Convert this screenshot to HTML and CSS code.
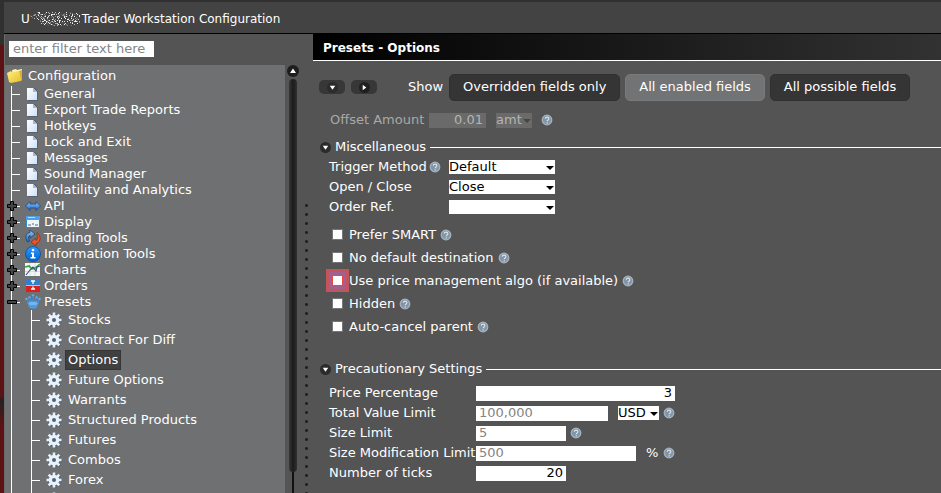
FILE: index.html
```html
<!DOCTYPE html>
<html lang="en">
<head>
<meta charset="utf-8">
<title>Trader Workstation Configuration</title>
<link rel="stylesheet" href="styles.css">
</head>
<body>
<svg class="defs" aria-hidden="true">
  <defs>
    <linearGradient id="gFolder" x1="0" y1="0" x2="1" y2="1"><stop offset="0" stop-color="#fff08a"/><stop offset="1" stop-color="#e6bd1c"/></linearGradient>
    <linearGradient id="gBlue" x1="0" y1="0" x2="0" y2="1"><stop offset="0" stop-color="#8fc8ff"/><stop offset="1" stop-color="#2466b8"/></linearGradient>
    <linearGradient id="gInfo" x1="0" y1="0" x2="0" y2="1"><stop offset="0" stop-color="#2d9bff"/><stop offset="1" stop-color="#0560cf"/></linearGradient>
    <linearGradient id="gPage" x1="0" y1="0" x2="1" y2="1"><stop offset="0" stop-color="#ffffff"/><stop offset="1" stop-color="#cfe2f8"/></linearGradient>
    <radialGradient id="gHelp" cx=".4" cy=".35" r=".7"><stop offset="0" stop-color="#7d93a8"/><stop offset="1" stop-color="#8799aa"/></radialGradient>
    <filter id="speckle" x="0" y="0" width="1" height="1">
      <feTurbulence type="fractalNoise" baseFrequency=".85" numOctaves="2" seed="7"/>
      <feColorMatrix values="0 0 0 0 .85  0 0 0 0 .85  0 0 0 0 .85  9 0 0 0 -4.9"/>
      <feComposite in2="SourceGraphic" operator="in"/>
    </filter>
  </defs>
  <symbol id="branch" viewBox="0 0 16 20"><path d="M4.500 0V20M4.500 10.500H13" fill="none" stroke="#fff"/></symbol>
  <symbol id="plus" viewBox="0 0 10 10"><path d="M3.500 .5h3v3h3v3h-3v3h-3v-3h-3v-3h3z" fill="#454545" stroke="#000"/></symbol>
  <symbol id="minus" viewBox="0 0 10 10"><path d="M.5 3.500h9v3h-9z" fill="#454545" stroke="#000"/></symbol>
  <symbol id="folder" viewBox="0 0 16 16"><path d="M5 2l4-1 1 1 5-1v11l-8 2z" fill="#fff5b5"/><path d="M0 5l4-2 1 1 7-1 2 10-10 2-2-1z" fill="url(#gFolder)"/><path d="M12 3l2 10 1-1V2z" fill="#d8b12c"/></symbol>
  <symbol id="page" viewBox="0 0 16 16"><path d="M3 2h7l3 4v9H3z" fill="#41566c" opacity=".6"/><path d="M2 2h6l4 4v8H2z" fill="url(#gPage)"/><path d="M8 2v4h4z" fill="#9fb8d4"/></symbol>
  <symbol id="api" viewBox="0 0 16 16"><path d="M.5 8L5 3.500V6h6V3.500L15.500 8 11 12.500V10H5v2.500z" fill="url(#gBlue)" stroke="#174a8c" stroke-width=".8"/></symbol>
  <symbol id="display" viewBox="0 0 16 16"><path d="M1.500 2.500h13v11h-13z" fill="#edf4fa" stroke="#3585c9"/><path d="M1 2h14v4H1z" fill="#4f9fe2"/><path d="M3 11h3m1-1h2m1 1h3" stroke="#829bb2" stroke-width="1.500"/><path d="M3 3.500h7" stroke="#b6daf8"/></symbol>
  <symbol id="trade" viewBox="0 0 16 16"><path d="M2.500 12C-.5 7 1 3 5 2.500V0l5 4-5 4V5.500C3.500 6 3 8 4.500 11z" fill="url(#gBlue)" stroke="#163b66" stroke-width=".7"/><path d="M12 2.500c4.500 3.500 4 9.500-1 11V16l-5-4 5-4v2.500c2-1 2.500-4 1-6z" fill="#ee552d" stroke="#8f270e" stroke-width=".7"/></symbol>
  <symbol id="info" viewBox="0 0 16 16"><circle cx="8" cy="8" r="7.500" fill="url(#gInfo)" stroke="#0551a6" stroke-width=".8"/><circle cx="8" cy="4" r="1.300" fill="#fff"/><path d="M6 6.500h3V11h1.500v1.500h-5V11H7V8H6z" fill="#fff"/></symbol>
  <symbol id="chart" viewBox="0 0 16 16"><path d="M0 1h15v13H0z" fill="#f2f6f8"/><path d="M0 5h15M0 9.500h15M5 1v13M10 1v13" stroke="#c5ced6" stroke-width=".6"/><path d="M0 5l4-1 3 3 3-1 5-4" fill="none" stroke="#3ba33c" stroke-width="1.600"/><path d="M1 13l4-5 3-3 3 4 1-4 3-1" fill="none" stroke="#344f78" stroke-width="1.100"/></symbol>
  <symbol id="order" viewBox="0 0 16 16"><path d="M1 1h14v7H1z" fill="#2f7fce"/><path d="M1 8h14v6H1z" fill="#d9201c"/><path d="M1 7.500h14" stroke="#a9c8e6"/><path d="M8 3v3M6 3h4M6 11h4M8 8.500v3" stroke="#fff" stroke-width="1.300"/></symbol>
  <symbol id="preset" viewBox="0 0 16 16"><path d="M2 8c1-2 11-2 12 0l-2 5c-1 2-7 2-8 0z" fill="#4d9be3"/><ellipse cx="8" cy="9" rx="5" ry="2" fill="#76b6ee"/><g fill="#5eacec"><circle cx="1.500" cy="5" r="1.300"/><circle cx="4.500" cy="3.500" r="1.300"/><circle cx="8" cy="1.500" r="1.300"/><circle cx="11.500" cy="3.500" r="1.300"/><circle cx="14.500" cy="5" r="1.300"/></g><path d="M2 6l2 3M5 4l1 4M8 2v6M11 4l-1 4M14 6l-2 3" stroke="#3f8bd5" stroke-width="1.500"/></symbol>
  <symbol id="gear" viewBox="0 0 16 16"><g stroke="#3e566f" stroke-width="3" opacity=".55" transform="translate(1 1)"><path d="M8 1v14M1 8h14M3 3l10 10M13 3L3 13"/></g><path d="M8 .5v15M.5 8h15M2.700 2.700l10.600 10.600M13.300 2.700L2.700 13.300" stroke="#e8f2fd" stroke-width="2.600"/><circle cx="8" cy="8" r="5.300" fill="#e8f2fd"/><circle cx="8" cy="8" r="2" fill="#536272"/></symbol>
  <symbol id="help" viewBox="0 0 12 12"><circle cx="6" cy="6" r="4.800" fill="url(#gHelp)" stroke="#a9b4be" stroke-width="1.200"/><path d="M4.300 4.800c0-2.200 3.600-2.200 3.600 0C7.900 6 6.200 5.900 6.200 7.200M6.200 8.200v1.200" fill="none" stroke="#dde4ea" stroke-width="1.100"/></symbol>
  <symbol id="down" viewBox="0 0 12 12"><circle cx="6" cy="6" r="6" fill="#2b2b2b"/><path d="M3 4h6L6 8.500z" fill="#fff"/></symbol>
  <symbol id="right" viewBox="0 0 12 12"><circle cx="6" cy="6" r="6" fill="#1f1f1f"/><path d="M4 3v6l4-3z" fill="#fff"/></symbol>
  <symbol id="up" viewBox="0 0 12 12"><circle cx="6" cy="6" r="6" fill="#1e1e1e"/><path d="M3 8h6L6 3.500z" fill="#fff"/></symbol>
</svg>

<header class="titlebar">
  <span>U</span>
  <svg class="masked" aria-hidden="true"><path d="M0 4L8 0h36l7 2-2 11-16 1-20-1z" fill="#fff" filter="url(#speckle)"/></svg>
  <span>Trader Workstation Configuration</span>
</header>

<div class="workspace">
  <aside class="sidebar">
    <input class="filter" type="text" placeholder="enter filter text here" aria-label="Filter">
    <div class="tree-area">
      <nav class="tree" aria-label="Configuration">
        <div class="root"><svg class="icon"><use href="#folder"/></svg><span>Configuration</span></div>
        <ul class="level1">
          <li><svg class="branch"><use href="#branch"/></svg><svg class="icon"><use href="#page"/></svg><a href="#general">General</a></li>
          <li><svg class="branch"><use href="#branch"/></svg><svg class="icon"><use href="#page"/></svg><a href="#export">Export Trade Reports</a></li>
          <li><svg class="branch"><use href="#branch"/></svg><svg class="icon"><use href="#page"/></svg><a href="#hotkeys">Hotkeys</a></li>
          <li><svg class="branch"><use href="#branch"/></svg><svg class="icon"><use href="#page"/></svg><a href="#lock">Lock and Exit</a></li>
          <li><svg class="branch"><use href="#branch"/></svg><svg class="icon"><use href="#page"/></svg><a href="#messages">Messages</a></li>
          <li><svg class="branch"><use href="#branch"/></svg><svg class="icon"><use href="#page"/></svg><a href="#sound">Sound Manager</a></li>
          <li><svg class="branch"><use href="#branch"/></svg><svg class="icon"><use href="#page"/></svg><a href="#volatility">Volatility and Analytics</a></li>
          <li><svg class="branch"><use href="#branch"/></svg><button class="toggle" aria-label="Expand API"><svg><use href="#plus"/></svg></button><svg class="icon"><use href="#api"/></svg><a href="#api-settings">API</a></li>
          <li><svg class="branch"><use href="#branch"/></svg><button class="toggle" aria-label="Expand Display"><svg><use href="#plus"/></svg></button><svg class="icon"><use href="#display"/></svg><a href="#display-settings">Display</a></li>
          <li><svg class="branch"><use href="#branch"/></svg><button class="toggle" aria-label="Expand Trading Tools"><svg><use href="#plus"/></svg></button><svg class="icon"><use href="#trade"/></svg><a href="#trading">Trading Tools</a></li>
          <li><svg class="branch"><use href="#branch"/></svg><button class="toggle" aria-label="Expand Information Tools"><svg><use href="#plus"/></svg></button><svg class="icon"><use href="#info"/></svg><a href="#information">Information Tools</a></li>
          <li><svg class="branch"><use href="#branch"/></svg><button class="toggle" aria-label="Expand Charts"><svg><use href="#plus"/></svg></button><svg class="icon"><use href="#chart"/></svg><a href="#charts">Charts</a></li>
          <li><svg class="branch"><use href="#branch"/></svg><button class="toggle" aria-label="Expand Orders"><svg><use href="#plus"/></svg></button><svg class="icon"><use href="#order"/></svg><a href="#orders">Orders</a></li>
          <li><svg class="branch"><use href="#branch"/></svg><button class="toggle" aria-label="Collapse Presets"><svg><use href="#minus"/></svg></button><svg class="icon"><use href="#preset"/></svg><a href="#presets">Presets</a></li>
        </ul>
        <ul class="level2">
          <li><svg class="branch"><use href="#branch"/></svg><svg class="icon"><use href="#gear"/></svg><a href="#stocks">Stocks</a></li>
          <li><svg class="branch"><use href="#branch"/></svg><svg class="icon"><use href="#gear"/></svg><a href="#cfd">Contract For Diff</a></li>
          <li><svg class="branch"><use href="#branch"/></svg><svg class="icon"><use href="#gear"/></svg><a class="selected" href="#options" aria-current="page">Options</a></li>
          <li><svg class="branch"><use href="#branch"/></svg><svg class="icon"><use href="#gear"/></svg><a href="#future-options">Future Options</a></li>
          <li><svg class="branch"><use href="#branch"/></svg><svg class="icon"><use href="#gear"/></svg><a href="#warrants">Warrants</a></li>
          <li><svg class="branch"><use href="#branch"/></svg><svg class="icon"><use href="#gear"/></svg><a href="#structured">Structured Products</a></li>
          <li><svg class="branch"><use href="#branch"/></svg><svg class="icon"><use href="#gear"/></svg><a href="#futures">Futures</a></li>
          <li><svg class="branch"><use href="#branch"/></svg><svg class="icon"><use href="#gear"/></svg><a href="#combos">Combos</a></li>
          <li><svg class="branch"><use href="#branch"/></svg><svg class="icon"><use href="#gear"/></svg><a href="#forex">Forex</a></li>
          <li><svg class="branch"><use href="#branch"/></svg><svg class="icon"><use href="#gear"/></svg></li>
        </ul>
      </nav>
      <div class="scroll">
        <button aria-label="Scroll up"><svg><use href="#up"/></svg></button>
        <div class="thumb"></div>
        <div class="track"></div>
      </div>
    </div>
  </aside>
  <div class="splitter"></div>

  <main class="content">
    <h1>Presets - Options</h1>
    <div class="toolbar">
      <button class="pill" aria-label="Expand all"><svg><use href="#down"/></svg></button>
      <button class="pill" aria-label="Collapse all"><svg><use href="#right"/></svg></button>
      <span class="show">Show</span>
      <div class="modes">
        <button>Overridden fields only</button>
        <button class="active">All enabled fields</button>
        <button>All possible fields</button>
      </div>
    </div>

    <div class="field offset">
      <label for="offset">Offset Amount</label>
      <input id="offset" class="num" type="text" value="0.01" disabled>
      <span class="select unit"><select aria-label="Offset unit" disabled><option>amt</option></select></span>
      <svg class="help"><use href="#help"/></svg>
    </div>

    <section>
      <h2><svg><use href="#down"/></svg><span>Miscellaneous</span></h2>
      <div class="fields misc">
        <div class="field"><div class="name"><label for="trigger">Trigger Method</label><svg class="help"><use href="#help"/></svg></div><span class="select wide"><select id="trigger"><option>Default</option></select></span></div>
        <div class="field"><div class="name"><label for="openclose">Open / Close</label></div><span class="select wide"><select id="openclose"><option>Close</option></select></span></div>
        <div class="field"><div class="name"><label for="ref">Order Ref.</label></div><span class="select wide"><select id="ref"><option></option></select></span></div>
      </div>
      <div class="checks">
        <div class="check"><span class="box"><input type="checkbox" id="smart"></span><label for="smart">Prefer SMART</label><svg class="help"><use href="#help"/></svg></div>
        <div class="check"><span class="box"><input type="checkbox" id="nodest"></span><label for="nodest">No default destination</label><svg class="help"><use href="#help"/></svg></div>
        <div class="check"><span class="box marked"><input type="checkbox" id="algo"></span><label for="algo">Use price management algo (if available)</label><svg class="help"><use href="#help"/></svg></div>
        <div class="check"><span class="box"><input type="checkbox" id="hidden"></span><label for="hidden">Hidden</label><svg class="help"><use href="#help"/></svg></div>
        <div class="check"><span class="box"><input type="checkbox" id="cancel"></span><label for="cancel">Auto-cancel parent</label><svg class="help"><use href="#help"/></svg></div>
      </div>
    </section>

    <section>
      <h2><svg><use href="#down"/></svg><span>Precautionary Settings</span></h2>
      <div class="fields limits">
        <div class="field"><label class="name" for="pct">Price Percentage</label><input id="pct" class="num w-full" type="text" value="3"></div>
        <div class="field"><label class="name" for="total">Total Value Limit</label><input id="total" class="w-total" type="text" placeholder="100,000"><span class="select currency"><select aria-label="Currency"><option>USD</option></select></span><svg class="help"><use href="#help"/></svg></div>
        <div class="field"><label class="name" for="size">Size Limit</label><input id="size" class="w-short" type="text" placeholder="5"><svg class="help"><use href="#help"/></svg></div>
        <div class="field"><label class="name" for="mod">Size Modification Limit</label><input id="mod" class="w-mod" type="text" placeholder="500"><span class="percent">%</span><svg class="help"><use href="#help"/></svg></div>
        <div class="field"><label class="name" for="ticks">Number of ticks</label><input id="ticks" class="num w-short" type="text" value="20"></div>
      </div>
    </section>
  </main>
</div>
</body>
</html>
```
FILE: styles.css
```css
* { box-sizing: border-box; }

body {
  margin: 0;
  height: 100vh;
  overflow: hidden;
  display: flex;
  flex-direction: column;
  border-left: 4px solid #3c3c3c;
  border-image: linear-gradient(to bottom, #303030 45px, #5c1214 46px, #5c1214 80%, #222 81%, #5c1214 86%) 1;
  background: #545454;
  color: #fff;
  font: 13px/16px "DejaVu Sans", Verdana, sans-serif;
}

button, input, select { font: inherit; color: inherit; }
button { border: 0; padding: 0; }
svg { flex: none; }
ul { margin: 0; padding: 0; list-style: none; }
a { color: inherit; text-decoration: none; }
.defs { position: absolute; width: 0; height: 0; }

.titlebar {
  flex: none;
  display: flex;
  align-items: center;
  height: 34px;
  padding: 3px 17px 0;
  border-top: 2px solid #303030;
  border-bottom: 1px solid #000;
  background: #434343;
  font-size: 12px;
}
.masked { width: 50px; height: 14px; margin-right: 2px; }

.workspace { flex: 1; min-height: 0; display: flex; }

.sidebar {
  flex: none;
  width: 296px;
  display: flex;
  flex-direction: column;
  border-left: 1px solid #6a6a6a;
}
.filter {
  width: 145px;
  height: 16px;
  margin: 7px 0 8px 4px;
  padding: 0 4px;
  border: 0;
  background: #fff;
  color: #000;
}
::placeholder { color: #858585; opacity: 1; }

.tree-area { flex: 1; min-height: 0; display: flex; }
.tree { flex: 1; overflow: hidden; padding-top: 1px; background: #6e7072; }
.root { display: flex; align-items: center; gap: 5px; height: 20px; padding-left: 2px; }
.tree li { position: relative; display: flex; align-items: center; }
.icon { width: 16px; height: 16px; margin-right: 3px; }
.root .icon { margin-right: 0; }
.level1 li { height: 16px; padding-left: 2px; }
.level2 li { height: 20px; padding-left: 22px; }
.branch { width: 16px; height: 20px; margin-right: 2px; }
.level1 { overflow: hidden; }
.level2 { background: linear-gradient(#fff, #fff) 6px 0 / 1px 100% no-repeat; }
.level2 .branch { margin-right: 3px; }
.level2 .icon { margin-right: 4px; }
.level2 a { padding: 1px 2px; }
.selected { background: #404040; outline: 1px solid #353535; }
.toggle { position: absolute; left: 2px; width: 10px; height: 10px; background: none; }
.toggle svg, .scroll svg { display: block; width: 100%; height: 100%; }

.scroll { width: 15px; display: flex; flex-direction: column; align-items: center; }
.scroll button { width: 12px; height: 12px; border-radius: 6px; background: none; }
.thumb { flex: 94; width: 8px; margin-top: 2px; border-radius: 4px; background: linear-gradient(90deg, #383838, #1b1b1b, #303030); }
.track { flex: 5; width: 2px; background: #111; }

.splitter {
  flex: none;
  width: 13px;
  margin-top: 167px;
  background: radial-gradient(circle, #202020 1px, transparent 2px) 0 0 / 13px 9px;
}

.content { flex: 1; min-width: 0; }
h1 {
  margin: 0;
  height: 27px;
  padding: 7px 10px 5px;
  border-bottom: 1px solid #fff;
  background: linear-gradient(90deg, #000, #323232);
  font-size: 12px;
  line-height: 14px;
}

.toolbar { display: flex; align-items: center; height: 52px; padding-left: 6px; }
.pill {
  width: 26px;
  height: 14px;
  margin-right: 6px;
  border-radius: 5px;
  background: #373737;
  display: grid;
  place-items: center;
}
.pill svg { width: 11px; height: 11px; }
.show { width: 41px; margin-left: 25px; }
.modes { display: flex; gap: 5px; }
.modes button {
  height: 27px;
  padding: 0 13px;
  border: 1px solid #303030;
  border-radius: 5px;
  background: #353535;
}
.modes .active { border-color: #787a7c; background: #717375; }

.field { display: flex; align-items: center; height: 20px; }
.field input {
  height: 15px;
  padding: 0 3px;
  border: 0;
  background: #fff;
  color: #000;
}
.field .num { text-align: right; }
.help { width: 12px; height: 12px; }
.select { position: relative; display: flex; height: 14px; background: #fff; color: #000; }
.select select {
  appearance: none;
  width: 100%;
  padding: 0;
  border: 0;
  background: none;
  line-height: 14px;
}
.select::after {
  content: "";
  position: absolute;
  right: 1px;
  top: 6px;
  border: 4px solid transparent;
  border-top-color: currentColor;
  border-bottom: 0;
}

.offset { margin: -3px 0 7px; padding-left: 17px; height: 20px; color: #a9a9a9; }
.offset label { width: 99px; }
.offset input:disabled { width: 57px; background: #6a6a6a; color: #b4b4b4; }
.unit { width: 36px; height: 15px; margin: 0 9px 0 10px; background: #6a6a6a; color: #454545; }
.unit select:disabled { color: #b4b4b4; opacity: 1; }

h2 {
  display: flex;
  align-items: center;
  gap: 4px;
  height: 20px;
  margin: 0;
  padding-left: 7px;
  font-size: 13px;
  font-weight: 400;
}
h2 svg { width: 11px; height: 11px; }
h2::after { content: ""; flex: 1; height: 1px; background: #fff; }

.fields { padding-left: 16px; }
.name { display: flex; align-items: center; gap: 2px; white-space: nowrap; }
.misc .name { width: 120px; }
.wide { width: 106px; }
.checks { padding: 6px 0 21px 13px; }
.check { display: flex; align-items: center; height: 23px; }
.check label { margin-right: 4px; }
.box { width: 23px; height: 23px; display: grid; place-items: center; }
.marked { border: 3px solid #c4545c; background: #a06090; }
.box input { appearance: none; width: 9px; height: 9px; margin: 0; background: #fff; outline: 1px solid #777; }
.marked input { outline-color: #f04545; }

.limits { padding-top: 4px; }
.limits .name { width: 147px; }
.w-full { width: 199px; }
.w-total { width: 132px; }
.w-short { width: 90px; }
.w-mod { width: 160px; }
.w-short + .help { margin-left: 4px; }
.currency { width: 41px; margin: 0 4px 0 10px; }
.percent { width: 17px; margin-left: 10px; }
```
